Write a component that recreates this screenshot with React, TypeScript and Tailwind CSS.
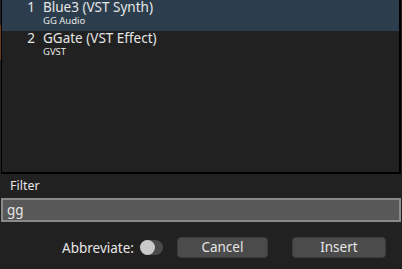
const rows = [
  { n: 1, name: "Blue3 (VST Synth)", vendor: "GG Audio", selected: true },
  { n: 2, name: "GGate (VST Effect)", vendor: "GVST", selected: false },
];

export default function App() {
  return (
    <div
      className="w-[402px] h-[269px] bg-[#212121] flex flex-col text-[#e6e6e6] overflow-hidden"
      style={{ fontFamily: '"Noto Sans", "DejaVu Sans", sans-serif' }}
    >
      {/* plugin list */}
      <div className="h-[174px] ml-px mr-px border-r-2 border-b-2 border-l border-black relative">
        <div className="absolute left-[-2px] top-[25px] w-px h-[35px] bg-[#6b3a1e]" />
        {rows.map((r) => (
          <div
            key={r.n}
            className={`h-[31px] flex ${r.selected ? "bg-[#2c3e4d]" : ""}`}
          >
            <div className="w-[41px] pr-[8px] text-right text-[13.5px] leading-[14px]">
              {r.n}
            </div>
            <div className="flex flex-col">
              <span className="text-[13.5px] leading-[14px]">{r.name}</span>
              <span className="text-[9.5px] leading-[12px] mt-[1px]">{r.vendor}</span>
            </div>
          </div>
        ))}
      </div>

      {/* filter */}
      <div className="text-[12.5px] leading-[16px] pl-[10px] pt-[4px] h-[24px]">Filter</div>
      <div className="mx-px h-[24px] bg-[#585858] border-2 border-[#8a8a8a] flex items-center px-[4px] text-[13.5px]">
        gg
      </div>

      {/* footer */}
      <div className="flex items-center pt-[15px]">
        <span className="ml-[62px] text-[13.5px] leading-[16px]">Abbreviate:</span>
        <div className="ml-[6px] w-[23px] h-[15px] rounded-full bg-[#4a4a4a] relative">
          <div className="absolute left-0 top-0 w-[15px] h-[15px] rounded-full bg-[#c9c9c9]" />
        </div>
        <button className="ml-[14px] w-[91px] h-[21px] rounded-[4px] bg-[#4b4b4b] border border-[#3c3c3c] text-[13.5px] leading-none">
          Cancel
        </button>
        <button className="ml-[24px] w-[94px] h-[21px] rounded-[4px] bg-[#4b4b4b] border border-[#3c3c3c] text-[13.5px] leading-none">
          Insert
        </button>
      </div>
    </div>
  );
}
